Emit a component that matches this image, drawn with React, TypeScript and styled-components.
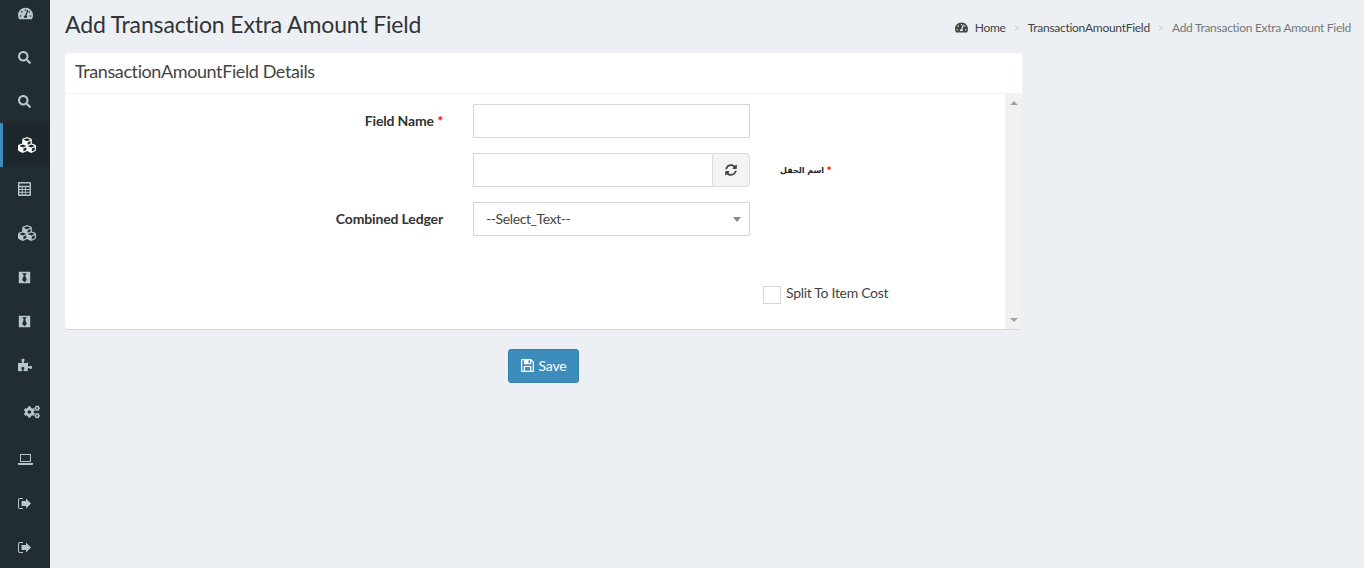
import React from 'react';
import { styled, createGlobalStyle } from 'styled-components';
import {
  FaTachometerAlt,
  FaSearch,
  FaCubes,
  FaBlackTie,
  FaPuzzlePiece,
  FaCogs,
  FaSyncAlt,
} from 'react-icons/fa';

const GlobalStyle = createGlobalStyle`
  html, body {
    margin: 0;
    padding: 0;
    height: 100%;
    background: #ecf0f5;
    overflow: hidden;
  }
  body {
    font-family: "Lato", "Open Sans", sans-serif;
    font-size: 14px;
    color: #333;
  }
`;

const Page = styled.div`
  display: flex;
  height: 568px;
`;

const Sidebar = styled.nav`
  width: 50px;
  flex-shrink: 0;
  background: #222d32;
  overflow: hidden;
`;

const Menu = styled.ul`
  list-style: none;
  margin: -9px 0 0;
  padding: 0;
`;

const MenuItem = styled.li<{ $active?: boolean; $shift?: number; $height?: number }>`
  display: flex;
  align-items: center;
  height: ${(p) => p.$height ?? 44}px;
  box-sizing: border-box;
  padding-left: ${(p) => 15 + (p.$shift ?? 0)}px;
  border-left: 3px solid ${(p) => (p.$active ? '#3c8dbc' : 'transparent')};
  background: ${(p) => (p.$active ? '#1e282c' : 'transparent')};
  color: ${(p) => (p.$active ? '#fff' : '#b8c7ce')};
  font-size: 14px;
`;

const Main = styled.main`
  flex: 1;
  min-width: 0;
  padding: 0 13px 0 15px;
`;

const HeaderRow = styled.header`
  display: flex;
  justify-content: space-between;
  height: 53px;
`;

const Title = styled.h1`
  margin: 10px 0 0;
  font-size: 23px;
  line-height: 29px;
  font-weight: 400;
  letter-spacing: -0.15px;
  color: #333;
`;

const Crumbs = styled.ol`
  display: flex;
  align-items: center;
  list-style: none;
  margin: 19px 0 0;
  padding: 0;
  height: 16px;
  font-size: 12px;
  letter-spacing: -0.28px;
  color: #444;
`;

const CrumbIcon = styled.span`
  display: flex;
  margin-right: 7px;
  font-size: 13px;
`;

const Crumb = styled.li<{ $current?: boolean }>`
  color: ${(p) => (p.$current ? '#777' : '#444')};
`;

const CrumbSep = styled.li`
  margin: 0 8px;
  color: #ccc;
  font-size: 11px;
`;

const Card = styled.section`
  width: 957px;
  height: 277px;
  background: #fff;
  border-radius: 3px;
  border-bottom: 1px solid #d2d6de;
  box-sizing: border-box;
  display: flex;
  flex-direction: column;
`;

const CardHeader = styled.div`
  height: 41px;
  box-sizing: border-box;
  border-bottom: 1px solid #f4f4f4;
  padding: 8px 10px 0;
  font-size: 18px;
  line-height: 20px;
  letter-spacing: -0.4px;
  color: #444;
`;

const CardBody = styled.div`
  flex: 1;
  display: flex;
  min-height: 0;
`;

const FormArea = styled.form`
  flex: 1;
  padding-top: 10px;
`;

const FieldRow = styled.div`
  display: flex;
  align-items: center;
  height: 34px;
  margin-bottom: 15px;
`;

const Label = styled.label`
  width: 378px;
  margin: -2px 30px 0 0;
  text-align: right;
  font-weight: 700;
  letter-spacing: -0.15px;
  color: #333;
`;

const Star = styled.span`
  color: #f00;
`;

const TextInput = styled.input`
  width: 277px;
  height: 34px;
  box-sizing: border-box;
  border: 1px solid #d2d6de;
  background: #fff;
  outline: none;
  padding: 6px 12px;
`;

const InputGroup = styled.div`
  display: flex;
  width: 277px;
  height: 34px;
`;

const GroupInput = styled(TextInput)`
  flex: 1;
  width: auto;
  min-width: 0;
  border-right: none;
`;

const Addon = styled.span`
  display: flex;
  align-items: center;
  justify-content: center;
  width: 38px;
  box-sizing: border-box;
  background: #f4f4f4;
  border: 1px solid #ddd;
  border-radius: 0 3px 3px 0;
  color: #444;
  font-size: 13px;
`;

const ArabicLabel = styled.span`
  margin-left: 30px;
  font-family: "DejaVu Sans", sans-serif;
  font-size: 8px;
  font-weight: 700;
  color: #222;
`;

const SelectBox = styled.div`
  position: relative;
  display: flex;
  align-items: center;
  width: 277px;
  height: 34px;
  box-sizing: border-box;
  border: 1px solid #d2d6de;
  padding: 0 0 2px 12px;
  letter-spacing: -0.4px;
  color: #444;
`;

const Caret = styled.span`
  position: absolute;
  right: 8px;
  top: 14px;
  border-top: 5px solid #888;
  border-left: 4px solid transparent;
  border-right: 4px solid transparent;
`;

const CheckRow = styled.div`
  display: flex;
  align-items: flex-start;
  margin: 50px 0 0 698px;
`;

const CheckBox = styled.span`
  width: 18px;
  height: 18px;
  box-sizing: border-box;
  border: 1px solid #d2d6de;
  background: #fff;
`;

const CheckLabel = styled.span`
  margin: -2px 0 0 5px;
  line-height: 17px;
  letter-spacing: -0.3px;
  color: #444;
`;

const ScrollTrack = styled.div`
  width: 17px;
  flex-shrink: 0;
  background: #f1f1f1;
  display: flex;
  flex-direction: column;
  justify-content: space-between;
  align-items: center;
  padding: 7px 0;
  box-sizing: border-box;
`;

const ScrollArrow = styled.span<{ $down?: boolean }>`
  border-left: 4px solid transparent;
  border-right: 4px solid transparent;
  ${(p) => (p.$down ? 'border-top' : 'border-bottom')}: 4px solid #a3a3a3;
`;

const Actions = styled.div`
  padding: 19px 0 0 443px;
`;

const SaveButton = styled.button`
  display: inline-flex;
  align-items: center;
  gap: 5px;
  width: 71px;
  height: 34px;
  justify-content: center;
  background: #3c8dbc;
  border: 1px solid #367fa9;
  border-radius: 3px;
  color: #fff;
  font-family: inherit;
  font-size: 14px;
  letter-spacing: -0.2px;
  padding: 0 0 1px;
`;

// these look different in the newer icon sets, so they are drawn here
const CalculatorIcon = () => (
  <svg width="13" height="14" viewBox="0 0 14 15" fill="currentColor">
    <path fillRule="evenodd" d="M1 0h12a1 1 0 0 1 1 1v13a1 1 0 0 1-1 1H1a1 1 0 0 1-1-1V1a1 1 0 0 1 1-1zM1.500 1.500v2.500h11v-2.500zM1.500 5.500v2h2.500v-2zM5 5.500v2h2.500v-2zM8.500 5.500v2h4v-2zM1.500 8.500v2h2.500v-2zM5 8.500v2h2.500v-2zM8.500 8.500v2h4v-2zM1.500 11.500v2h2.500v-2zM5 11.500v2h2.500v-2zM8.500 11.500v2h4v-2z" />
  </svg>
);

const LaptopIcon = () => (
  <svg width="15" height="11" viewBox="0 0 15 11" fill="currentColor">
    <path fillRule="evenodd" d="M2 0h11v8H2zM3 1v6h9V1z" />
    <path d="M0 9h15v1a1 1 0 0 1-1 1H1a1 1 0 0 1-1-1z" />
  </svg>
);

const SignOutIcon = () => (
  <svg width="13" height="11" viewBox="0 0 13 11" fill="currentColor">
    <path d="M5 0v1H2a1 1 0 0 0-1 1v7a1 1 0 0 0 1 1h3v1H2a2 2 0 0 1-2-2V2a2 2 0 0 1 2-2z" />
    <path d="M8 0.500l5 5-5 5V8H3.500V3H8z" />
  </svg>
);

const SaveIcon = () => (
  <svg width="13" height="13" viewBox="0 0 13 13" fill="currentColor">
    <path fillRule="evenodd" d="M1 0h9l3 3v9a1 1 0 0 1-1 1H1a1 1 0 0 1-1-1V1a1 1 0 0 1 1-1zM1.300 1.300v10.400h1.400V7h7.600v4.700h1.400V3.600L10.300 2v3.200H3V1.300zM4 11.700h5V8H4zM7.500 1.300v3h1.500v-3z" />
  </svg>
);

const App = () => {
  return (
    <>
      <GlobalStyle />
      <Page>
        <Sidebar>
          <Menu>
            <MenuItem><FaTachometerAlt size={15} /></MenuItem>
            <MenuItem><FaSearch size={13} /></MenuItem>
            <MenuItem><FaSearch size={13} /></MenuItem>
            <MenuItem $active><FaCubes size={18} /></MenuItem>
            <MenuItem><CalculatorIcon /></MenuItem>
            <MenuItem><FaCubes size={18} /></MenuItem>
            <MenuItem><FaBlackTie size={13} /></MenuItem>
            <MenuItem><FaBlackTie size={13} /></MenuItem>
            <MenuItem><FaPuzzlePiece size={14} /></MenuItem>
            <MenuItem $shift={6} $height={50}><FaCogs size={16} /></MenuItem>
            <MenuItem><LaptopIcon /></MenuItem>
            <MenuItem><SignOutIcon /></MenuItem>
            <MenuItem><SignOutIcon /></MenuItem>
          </Menu>
        </Sidebar>
        <Main>
          <HeaderRow>
            <Title>Add Transaction Extra Amount Field</Title>
            <Crumbs>
              <CrumbIcon><FaTachometerAlt /></CrumbIcon>
              <Crumb>Home</Crumb>
              <CrumbSep>&gt;</CrumbSep>
              <Crumb>TransactionAmountField</Crumb>
              <CrumbSep>&gt;</CrumbSep>
              <Crumb $current>Add Transaction Extra Amount Field</Crumb>
            </Crumbs>
          </HeaderRow>
          <Card>
            <CardHeader>TransactionAmountField Details</CardHeader>
            <CardBody>
              <FormArea>
                <FieldRow>
                  <Label>Field Name <Star>*</Star></Label>
                  <TextInput />
                </FieldRow>
                <FieldRow>
                  <Label />
                  <InputGroup>
                    <GroupInput />
                    <Addon><FaSyncAlt size={12} /></Addon>
                  </InputGroup>
                  <ArabicLabel>اسم الحقل <Star>*</Star></ArabicLabel>
                </FieldRow>
                <FieldRow>
                  <Label>Combined Ledger</Label>
                  <SelectBox>
                    --Select_Text--
                    <Caret />
                  </SelectBox>
                </FieldRow>
                <CheckRow>
                  <CheckBox />
                  <CheckLabel>Split To Item Cost</CheckLabel>
                </CheckRow>
              </FormArea>
              <ScrollTrack>
                <ScrollArrow />
                <ScrollArrow $down />
              </ScrollTrack>
            </CardBody>
          </Card>
          <Actions>
            <SaveButton type="button"><SaveIcon /> Save</SaveButton>
          </Actions>
        </Main>
      </Page>
    </>
  );
};

export default App;
